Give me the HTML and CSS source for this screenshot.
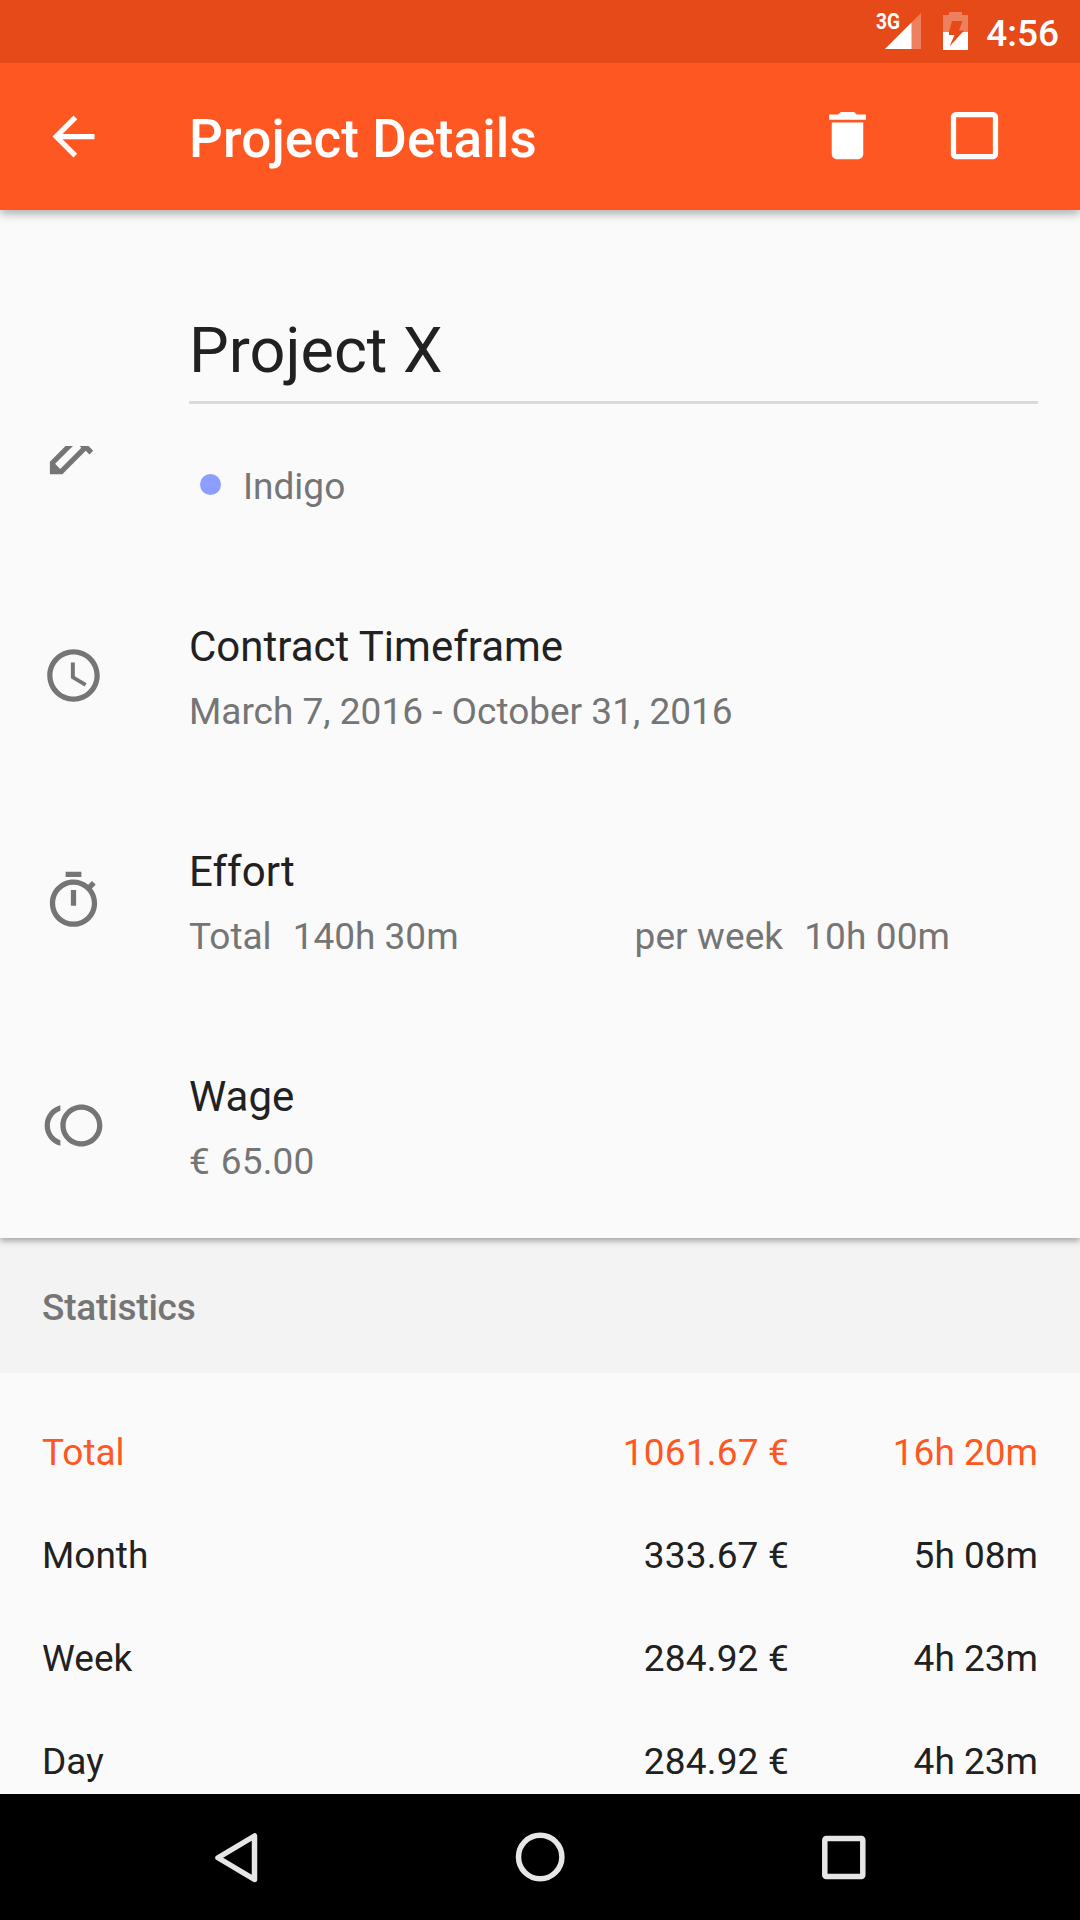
FILE: index.html
```html
<!DOCTYPE html>
<html lang="en">
<head>
<meta charset="utf-8">
<title>Project Details</title>
<link rel="stylesheet" href="styles.css">
</head>
<body>
<div class="screen">
  <div class="status-bar">
    <svg class="signal" width="46" height="48" viewBox="0 -8 46 48">
      <path d="M45 1v36H9z" fill="#fff" fill-opacity=".3"/>
      <path d="M35.500 10.500V37H9z" fill="#fff"/>
      <text class="network" x="0" y="17" textLength="24" lengthAdjust="spacingAndGlyphs">3G</text>
    </svg>
    <svg class="battery" width="25" height="38" viewBox="0 0 25 38">
      <path fill="#fff" fill-opacity=".3" fill-rule="evenodd" d="M6 0h13v3h6v17H0V3h6zM9 9L6 20h13.700l1.300-1.500h-5L19.500 9z"/>
      <path fill="#fff" fill-rule="evenodd" d="M0 20h25v18H0zM6 20v3h5.500L6.500 34.500 19.700 20z"/>
    </svg>
    <span class="clock">4:56</span>
  </div>

  <header class="app-bar">
    <svg class="icon" viewBox="0 0 24 24"><path d="M20 11H7.830l5.590-5.590L12 4l-8 8 8 8 1.410-1.410L7.830 13H20v-2z"/></svg>
    <h1 class="app-title">Project Details</h1>
    <div class="actions">
      <svg class="icon" viewBox="0 0 24 24"><path d="M6 19c0 1.100.9 2 2 2h8c1.100 0 2-.9 2-2V7H6v12zM19 4h-3.500l-1-1h-5l-1 1H5v2h14V4z"/></svg>
      <svg class="icon" viewBox="0 0 24 24"><path d="M19 5v14H5V5h14m0-2H5c-1.100 0-2 .9-2 2v14c0 1.100.9 2 2 2h14c1.100 0 2-.9 2-2V5c0-1.100-.9-2-2-2z"/></svg>
    </div>
  </header>

  <main class="details">
    <h2 class="project-name">Project X</h2>

    <div class="detail color-detail">
      <svg class="icon" viewBox="0 0 24 24"><path d="M20.710 5.630l-2.340-2.340c-.39-.39-1.020-.39-1.410 0l-3.120 3.120-1.930-1.910-1.410 1.410 1.420 1.420L3 16.250V21h4.750l8.920-8.920 1.420 1.420 1.410-1.410-1.920-1.920 3.120-3.120c.4-.4.4-1.030.01-1.420zM6.920 19L5 17.080l8.060-8.060 1.920 1.920L6.920 19z"/></svg>
      <div class="color-value"><span class="dot"></span><span class="value">Indigo</span></div>
    </div>

    <div class="detail">
      <svg class="icon" viewBox="0 0 24 24"><path d="M11.990 2C6.470 2 2 6.480 2 12s4.470 10 9.990 10C17.520 22 22 17.520 22 12S17.520 2 11.990 2zM12 20c-4.420 0-8-3.580-8-8s3.580-8 8-8 8 3.580 8 8-3.580 8-8 8zM12.500 7H11v6l5.250 3.150.75-1.230-4.500-2.670z"/></svg>
      <div class="detail-text">
        <h3 class="label">Contract Timeframe</h3>
        <div class="value">March 7, 2016 - October 31, 2016</div>
      </div>
    </div>

    <div class="detail">
      <svg class="icon" viewBox="0 0 24 24"><path d="M15 1H9v2h6V1zm-4 13h2V8h-2v6zm8.030-6.610l1.420-1.420c-.43-.51-.9-.99-1.410-1.410l-1.420 1.420C16.070 4.740 14.120 4 12 4c-4.970 0-9 4.030-9 9s4.020 9 9 9 9-4.030 9-9c0-2.120-.74-4.070-1.970-5.610zM12 20c-3.870 0-7-3.130-7-7s3.130-7 7-7 7 3.130 7 7-3.130 7-7 7z"/></svg>
      <div class="detail-text">
        <h3 class="label">Effort</h3>
        <div class="effort">
          <div class="value pair"><span>Total</span><span>140h 30m</span></div>
          <div class="value pair weekly"><span>per week</span><span>10h 00m</span></div>
        </div>
      </div>
    </div>

    <div class="detail wage-detail">
      <svg class="icon" viewBox="0 0 24 24"><path d="M15 4c-4.420 0-8 3.580-8 8s3.580 8 8 8 8-3.580 8-8-3.580-8-8-8zm0 14c-3.310 0-6-2.690-6-6s2.690-6 6-6 6 2.690 6 6-2.690 6-6 6zM3 12c0-2.610 1.670-4.830 4-5.650V4.260C3.550 5.150 1 8.270 1 12s2.550 6.850 6 7.740v-2.090c-2.330-.82-4-3.040-4-5.650z"/></svg>
      <div class="detail-text">
        <h3 class="label">Wage</h3>
        <div class="value wage">€ 65.00</div>
      </div>
    </div>
  </main>

  <section class="statistics">
    <h2 class="section-title">Statistics</h2>
    <div class="rows">
      <div class="row total"><span>Total</span><span class="num money">1061.67 €</span><span class="num">16h 20m</span></div>
      <div class="row"><span>Month</span><span class="num money">333.67 €</span><span class="num">5h 08m</span></div>
      <div class="row"><span>Week</span><span class="num money">284.92 €</span><span class="num">4h 23m</span></div>
      <div class="row"><span>Day</span><span class="num money">284.92 €</span><span class="num">4h 23m</span></div>
    </div>
  </section>

  <nav class="nav-bar">
    <svg width="63" height="63" viewBox="0 0 63 63"><path d="M49.500 10v43.500L13 31.750z"/></svg>
    <svg width="63" height="63" viewBox="0 0 63 63"><circle cx="31.200" cy="31" r="21.700"/></svg>
    <svg width="63" height="63" viewBox="0 0 63 63"><rect x="12.800" y="12.500" width="38" height="38" rx="1.500"/></svg>
  </nav>
</div>
</body>
</html>
```

FILE: styles.css
```css
* {
  box-sizing: border-box;
}

body {
  margin: 0;
  background: #fafafa;
  color: #212121;
  font-family: Roboto, sans-serif;
  font-size: 37px;
}

h1, h2, h3 {
  margin: 0;
  font-weight: 400;
}

.screen {
  display: flex;
  flex-direction: column;
  width: 1080px;
  height: 1920px;
  overflow: hidden;
}

.icon {
  flex: none;
  width: 63px;
  height: 63px;
  fill: currentColor;
}

/* Status bar */
.status-bar {
  position: relative;
  z-index: 3;
  display: flex;
  flex: none;
  justify-content: flex-end;
  height: 63px;
  padding: 12px 21px 0 0;
  background: #e64a19;
  color: #fff;
}

.signal {
  margin-top: -8px;
}

.network {
  fill: #fff;
  font-size: 22.5px;
  font-weight: 700;
}

.battery {
  margin-left: 21px;
}

.clock {
  margin-left: 18px;
  font-weight: 500;
  line-height: 43px;
}

/* App bar */
.app-bar {
  position: relative;
  z-index: 2;
  display: flex;
  flex: none;
  align-items: center;
  height: 147px;
  padding: 0 74.5px 0 42px;
  background: #ff5722;
  box-shadow: 0 4px 9px rgba(0, 0, 0, .3);
  color: #fff;
}

.app-title {
  margin-left: 84px;
  padding-top: 4px;
  font-size: 53px;
  font-weight: 500;
  letter-spacing: .15px;
}

.actions {
  display: flex;
  gap: 64px;
  margin-left: auto;
  padding-bottom: 2px;
}

/* Project details */
.details {
  position: relative;
  z-index: 1;
  flex: none;
  height: 1028px;
  padding-top: 101px;
  box-shadow: 0 3px 6px rgba(0, 0, 0, .32);
}

.project-name {
  margin: 0 42px 42px 189px;
  padding-bottom: 10px;
  border-bottom: 3px solid #dadada;
  font-size: 63px;
  line-height: 80px;
}

.detail {
  display: flex;
  gap: 84px;
  height: 225px;
  padding: 25px 42px 0;
}

.detail .icon {
  margin-top: 27px;
  color: #757575;
}

.detail-text {
  flex: 1;
}

.label {
  margin-bottom: 10px;
  font-size: 42px;
  line-height: 60px;
}

.value {
  color: #757575;
  line-height: 50px;
}

.color-detail {
  height: 146px;
  padding-top: 0;
  overflow: hidden;
}

.color-detail .icon {
  margin-top: -27px;
}

.color-value {
  display: flex;
  gap: 22px;
  padding: 16px 0 0 11px;
}

.dot {
  width: 21px;
  height: 21px;
  margin-top: 12px;
  border-radius: 50%;
  background: #8c9eff;
}

.effort {
  display: grid;
  grid-template-columns: 445.5px auto;
}

.pair {
  display: flex;
  gap: 21px;
}

.weekly {
  letter-spacing: .1px;
}

.wage {
  letter-spacing: .15px;
  word-spacing: 1.5px;
}

.wage-detail {
  height: 196px;
}

/* Statistics */
.statistics {
  flex: 1;
  min-height: 0;
  overflow: hidden;
}

.section-title {
  height: 135px;
  padding: 45px 42px 0;
  background: #f3f3f3;
  color: #757575;
  font-size: 37px;
  font-weight: 500;
  letter-spacing: -.2px;
  line-height: 50px;
}

.rows {
  padding: 28px 42px 0;
}

.row {
  display: grid;
  grid-template-columns: 1fr 400px 249px;
  line-height: 103px;
}

.num {
  text-align: right;
}

.money {
  letter-spacing: .2px;
}

.total {
  color: #ff5722;
}

/* Navigation bar */
.nav-bar {
  display: flex;
  flex: none;
  align-items: center;
  justify-content: space-between;
  height: 126px;
  padding: 0 205px;
  background: #000;
}

.nav-bar svg {
  fill: none;
  stroke: #e6e6e6;
  stroke-width: 5.5;
  stroke-linejoin: round;
}
```
